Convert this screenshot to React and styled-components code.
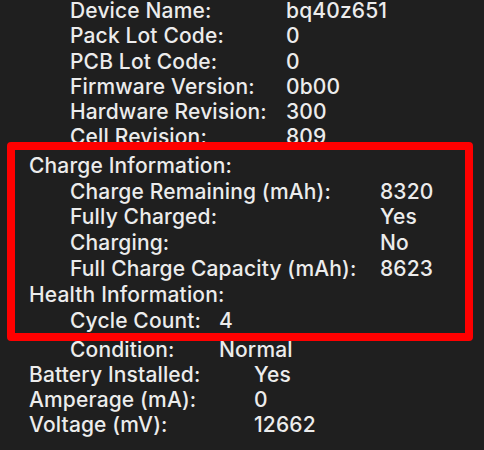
import React from "react";
import styled, { createGlobalStyle } from "styled-components";

const GlobalStyle = createGlobalStyle`
  html, body {
    margin: 0;
    padding: 0;
    background: #1f1f1f;
  }
  body {
    font-family: Inter, "Noto Sans", "Liberation Sans", sans-serif;
    color: #ececec;
    -webkit-font-smoothing: antialiased;
  }
`;

const Page = styled.div`
  width: 484px;
  height: 450px;
  overflow: hidden;
  font-size: 21px;
  font-weight: 500;
  letter-spacing: 0.15px;
`;

const Group = styled.div`
  position: relative;
  margin-top: ${(p) => p.$gap || 0}px;
  line-height: ${(p) => p.$lh}px;
`;

const Highlight = styled(Group)`
  &::before {
    content: "";
    position: absolute;
    top: -11px;
    bottom: -8px;
    left: 7px;
    right: 11px;
    border: 8px solid #ff0000;
    border-radius: 4px;
    z-index: 1;
    pointer-events: none;
  }
`;

const Heading = styled.div`
  padding-left: 29px;
  white-space: nowrap;
`;

const Row = styled.div`
  display: grid;
  grid-template-columns: ${(p) => p.$col}px auto;
  padding-left: ${(p) => p.$indent}px;
  white-space: nowrap;
`;

const Label = styled.span``;
const Value = styled.span``;

const Field = ({ label, value, col, indent = 70 }) => (
  <Row $col={col} $indent={indent}>
    <Label>{label}</Label>
    <Value>{value}</Value>
  </Row>
);

const device = [
  ["Device Name:", "bq40z651"],
  ["Pack Lot Code:", "0"],
  ["PCB Lot Code:", "0"],
  ["Firmware Version:", "0b00"],
  ["Hardware Revision:", "300"],
  ["Cell Revision:", "809"],
];

const charge = [
  ["Charge Remaining (mAh):", "8320"],
  ["Fully Charged:", "Yes"],
  ["Charging:", "No"],
  ["Full Charge Capacity (mAh):", "8623"],
];

const battery = [
  ["Battery Installed:", "Yes"],
  ["Amperage (mA):", "0"],
  ["Voltage (mV):", "12662"],
];

export default function App() {
  return (
    <>
      <GlobalStyle />
      <Page>
        <Group $lh={25.3} $gap={-2}>
          {device.map(([l, v]) => (
            <Field key={l} label={l} value={v} col={216} />
          ))}
        </Group>
        <Highlight $lh={25.8} $gap={3}>
          <Heading>Charge Information:</Heading>
          {charge.map(([l, v]) => (
            <Field key={l} label={l} value={v} col={310} />
          ))}
          <Heading>Health Information:</Heading>
          <Field label="Cycle Count:" value="4" col={149} />
        </Highlight>
        <Group $lh={25} $gap={4}>
          <Field label="Condition:" value="Normal" col={149} />
          {battery.map(([l, v]) => (
            <Field key={l} label={l} value={v} col={225} indent={29} />
          ))}
        </Group>
      </Page>
    </>
  );
}
